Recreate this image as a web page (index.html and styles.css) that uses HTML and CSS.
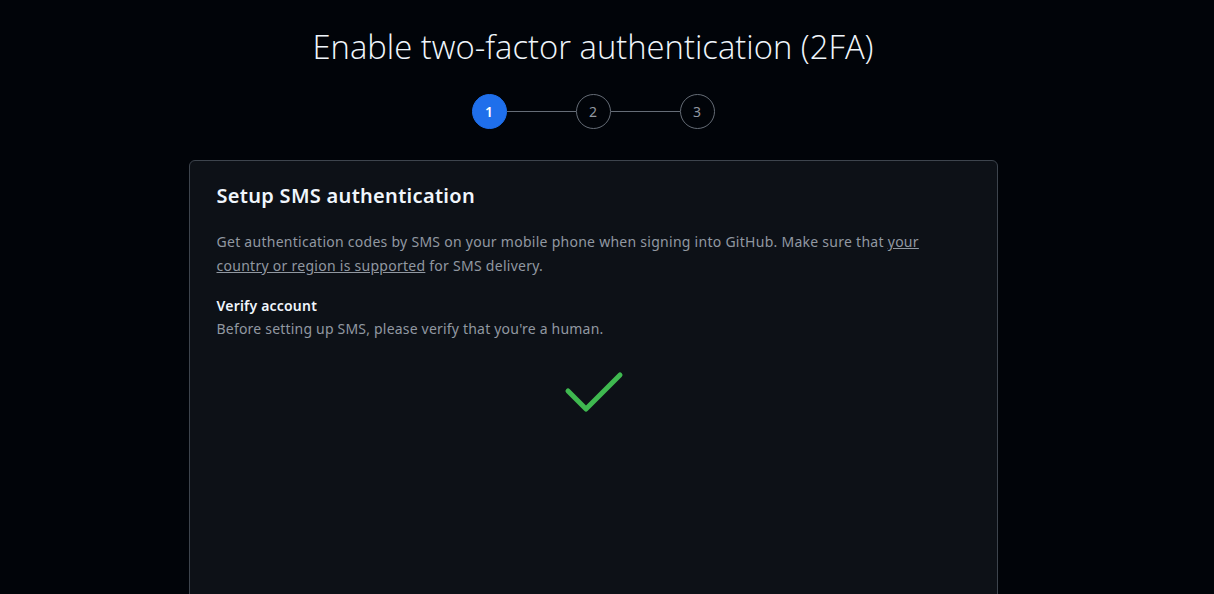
FILE: index.html
```html
<!DOCTYPE html>
<html lang="en">
<head>
<meta charset="utf-8">
<title>Enable two-factor authentication (2FA)</title>
<link rel="stylesheet" href="styles.css">
</head>
<body>
<main class="page">
  <h1 class="title">Enable two-factor authentication (2FA)</h1>
  <ol class="stepper">
    <li class="step step-active">1</li>
    <li class="connector"></li>
    <li class="step">2</li>
    <li class="connector"></li>
    <li class="step">3</li>
  </ol>
  <section class="card">
    <h2 class="card-title">Setup SMS authentication</h2>
    <p class="lead">Get authentication codes by SMS on your mobile phone when signing into GitHub. Make sure that <a href="#" class="link">your country or region is supported</a> for SMS delivery.</p>
    <h3 class="sub-title">Verify account</h3>
    <p class="note">Before setting up SMS, please verify that you're a human.</p>
    <div class="verified">
      <svg width="60" height="44" viewBox="0 0 60 44" aria-hidden="true">
        <polyline points="4,21 22,39 56,5" fill="none" stroke="#3fb950" stroke-width="5" stroke-linecap="round" stroke-linejoin="round"/>
      </svg>
    </div>
  </section>
</main>
</body>
</html>
```
FILE: styles.css
```css
html, body {
  margin: 0;
  padding: 0;
  background: #010409;
  height: 100%;
  overflow: hidden;
}
body {
  font-family: "Noto Sans", "Liberation Sans", sans-serif;
  color: #f0f6fc;
}
.page {
  display: flex;
  flex-direction: column;
  align-items: center;
  padding-right: 28px;
  padding-top: 24px;
}
.title {
  margin: 0;
  font-family: "Open Sans", "Noto Sans", sans-serif;
  font-weight: 300;
  font-size: 32.8px;
  line-height: 46px;
  color: #f0f6fc;
  letter-spacing: 0;
}
.stepper {
  list-style: none;
  margin: 24px 0 0;
  padding: 0;
  display: flex;
  align-items: center;
}
.step {
  width: 33px;
  height: 33px;
  border: 1px solid #656c76;
  border-radius: 50%;
  display: flex;
  align-items: center;
  justify-content: center;
  font-size: 14px;
  color: #9198a1;
}
.step-active {
  background: #1f6feb;
  border-color: #1f6feb;
  color: #ffffff;
  font-weight: 600;
}
.connector {
  width: 69px;
  height: 1px;
  background: #656c76;
}
.card {
  margin-top: 31px;
  width: 755px;
  min-height: 600px;
  background: #0d1117;
  border: 1px solid #3d444d;
  border-radius: 6px;
  padding: 20px 25px 20px 27px;
}
.card-title {
  margin: 0;
  font-size: 20px;
  line-height: 30px;
  font-weight: 600;
  letter-spacing: 0.3px;
  color: #f0f6fc;
}
.lead {
  margin: 19px 0 0;
  font-size: 14px;
  line-height: 24px;
  letter-spacing: 0.27px;
  color: #9198a1;
}
.link {
  color: #9198a1;
  text-decoration: underline;
}
.sub-title {
  margin: 16px 0 0;
  font-size: 14px;
  line-height: 23px;
  font-weight: 600;
  letter-spacing: 0.2px;
  color: #f0f6fc;
}
.note {
  margin: 0;
  font-size: 14px;
  line-height: 23px;
  letter-spacing: 0.2px;
  color: #9198a1;
}
.verified {
  display: flex;
  justify-content: center;
  margin-top: 30px;
}
```
